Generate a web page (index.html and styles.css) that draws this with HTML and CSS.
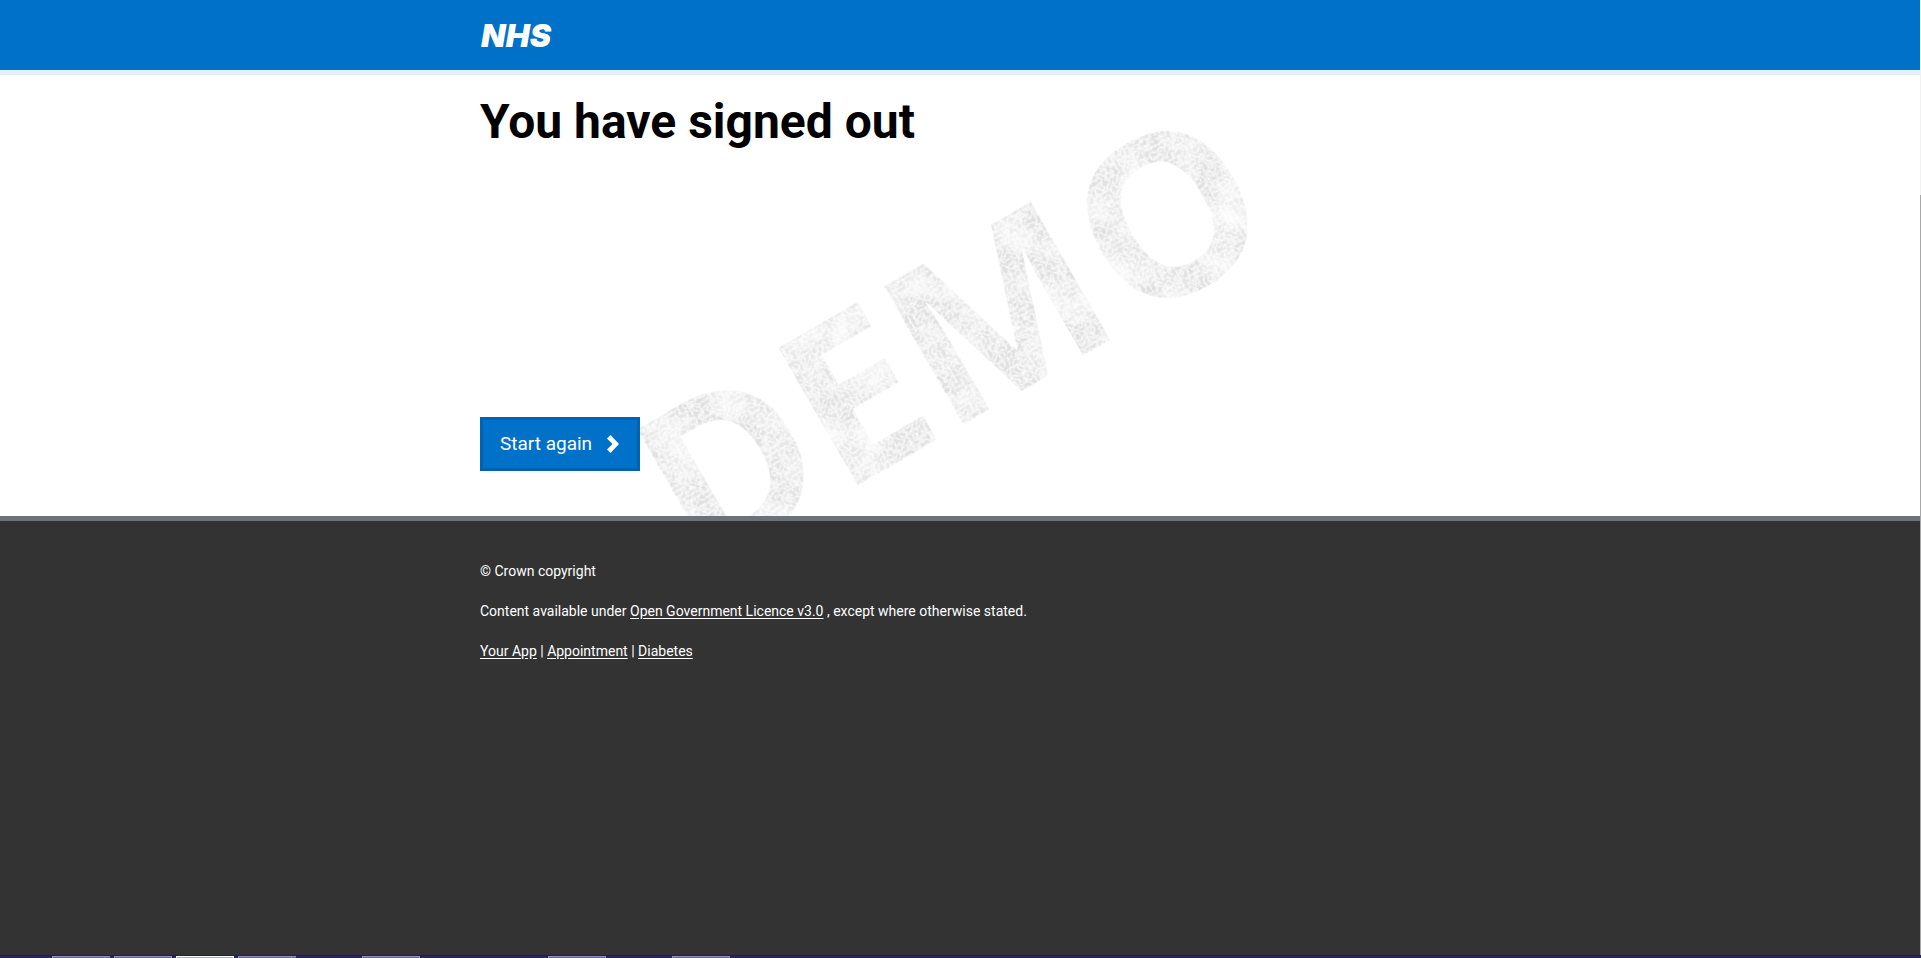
FILE: index.html
```html
<!DOCTYPE html>
<html lang="en">
<head>
<meta charset="utf-8">
<title>You have signed out</title>
<link rel="stylesheet" href="styles.css">
</head>
<body>
<div class="viewport">
<div class="page">
  <header class="header">
    <div class="container">
      <a class="logo" href="#" aria-label="NHS home">
        <svg class="logo-image" viewBox="0 0 80 40" aria-hidden="true"><text class="logo-text" x="1" y="32">NHS</text></svg>
      </a>
    </div>
  </header>
  <main class="main">
    <div class="container">
      <svg class="watermark" aria-hidden="true">
        <defs>
          <filter id="scratches" filterUnits="userSpaceOnUse" x="0" y="-250" width="900" height="400" color-interpolation-filters="sRGB">
            <feTurbulence type="turbulence" baseFrequency="0.2" numOctaves="3" seed="8" result="fine"/>
            <feColorMatrix in="fine" type="matrix" values="0 0 0 0 0.88  0 0 0 0 0.88  0 0 0 0 0.88  1.9 0.6 0 0 -0.1" result="ink"/>
            <feTurbulence type="fractalNoise" baseFrequency="0.03" numOctaves="2" seed="3" result="coarse"/>
            <feColorMatrix in="coarse" type="matrix" values="0 0 0 0 0  0 0 0 0 0  0 0 0 0 0  1.6 0 0 0 -0.02" result="wear"/>
            <feComposite in="ink" in2="wear" operator="in" result="worn"/>
            <feComposite in="worn" in2="SourceGraphic" operator="in"/>
          </filter>
        </defs>
        <g transform="translate(216 504) rotate(-30)">
          <text class="watermark-text" x="4 167 289 502" y="0" filter="url(#scratches)">DEMO</text>
        </g>
      </svg>
      <h1 class="title">You have signed out</h1>
      <button class="button" type="button">Start again
        <svg class="chevron" viewBox="0 0 14 20" aria-hidden="true"><path d="M4.500 1 1 4.500 6.500 10 1 15.500 4.500 19 13 10z"/></svg>
      </button>
    </div>
  </main>
  <footer class="footer">
    <div class="container">
      <p>© Crown copyright</p>
      <p>Content available under <a href="#">Open Government Licence v3.0</a> , except where otherwise stated.</p>
      <p><a href="#">Your App</a> | <a href="#">Appointment</a> | <a href="#">Diabetes</a></p>
    </div>
  </footer>
</div>
<div class="scrollbar" aria-hidden="true"><div class="thumb"></div></div>
</div>
<div class="taskbar" aria-hidden="true">
  <i class="task split"></i><i class="tail"></i><i class="task"></i><i class="task active"></i><i class="task split"></i><i class="tail"></i><i class="task far"></i><i class="task farther"></i><i class="task far"></i>
</div>
</body>
</html>
```
FILE: styles.css
```css
* { box-sizing: border-box; }
body {
  margin: 0;
  min-height: 100vh;
  display: flex;
  flex-direction: column;
  font-family: Roboto, "Liberation Sans", sans-serif;
  color: #000;
  background: #333;
}
.viewport { flex: 1; display: flex; }
.page { flex: 1; min-width: 0; display: flex; flex-direction: column; }
.container { max-width: 960px; margin: 0 auto; }
.header { background: #0071c8; border-bottom: 5px solid #e4effa; }
.header .container { padding: 15px 0; }
.logo { display: block; width: 80px; text-decoration: none; }
.logo-image { display: block; width: 80px; height: 40px; }
.logo-text { font: italic 900 32px Inter, "Open Sans", sans-serif; fill: #fff; }
.main { background: #fff; position: relative; overflow: hidden; }
.main .container { position: relative; padding-bottom: 45px; }
.watermark {
  position: absolute;
  top: 0;
  left: 0;
  width: 100%;
  height: 100%;
  overflow: visible;
}
.watermark-text { font: 700 222px "Open Sans", sans-serif; }
.title {
  position: relative;
  margin: 0 0 261px;
  padding-top: 13px;
  font-size: 48px;
  line-height: 68px;
  font-weight: 700;
}
.button {
  position: relative;
  display: flex;
  align-items: center;
  gap: 14px;
  height: 54px;
  padding: 0 17px;
  border: 3px solid #0062b3;
  background: #0071c8;
  color: #fff;
  font: 400 19px/28px Roboto, sans-serif;
}
.chevron { width: 14px; height: 20px; fill: #fff; }
.footer {
  flex: 1;
  border-top: 5px solid #6a7379;
  background: #333;
  color: #fff;
  font-size: 14px;
  line-height: 20px;
}
.footer .container { padding: 40px 0; }
.footer p { margin: 0 0 20px; }
.footer a { color: #fff; text-underline-offset: 2px; }
.scrollbar { width: 1px; padding-top: 195px; display: flex; flex-direction: column; background: #f1f1f1; }
.thumb { flex: 1; background: #a8a8a8; }
.taskbar {
  display: flex;
  height: 3px;
  padding-left: 52px;
  background: #272663;
  border-top: 1px solid #222048;
}
.task { width: 58px; margin-right: 4px; background: #66659a; border: 1px solid #9291bb; border-bottom: 0; }
.split { width: 54px; margin-right: 0; }
.tail { width: 4px; margin-right: 4px; background: #66659a; border-top: 1px solid #9291bb; }
.active { background: #aaa9c6; border-color: #fff; }
.far { margin-left: 62px; }
.farther { margin-left: 124px; }
```
